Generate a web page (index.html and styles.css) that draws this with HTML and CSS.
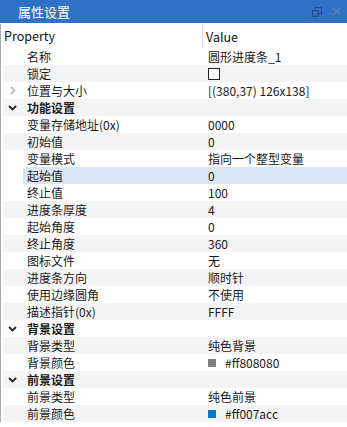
FILE: index.html
```html
<!DOCTYPE html>
<html lang="zh">
<head>
  <meta charset="UTF-8">
  <title>属性设置</title>
  <link rel="stylesheet" href="styles.css">
</head>
<body>
  <!-- 标题栏 -->
  <div class="titlebar">
    <span class="title">属性设置</span>
    <div class="tools">
      <svg class="btn-float" width="10" height="10" viewBox="0 0 10 10">
        <path d="M3 0.5h6.5v6.5h-2M3 0.5v2" fill="none" stroke="#1d4f91" stroke-width="1.2"/>
        <rect x="0.6" y="3.6" width="5.8" height="5.8" fill="none" stroke="#1d4f91" stroke-width="1.2"/>
      </svg>
      <svg class="btn-close" width="9" height="9" viewBox="0 0 9 9">
        <path d="M1 1l7 7M8 1l-7 7" stroke="#5a80b6" stroke-width="1.6"/>
      </svg>
    </div>
  </div>

  <!-- 属性表 -->
  <div class="prop-table">
    <div class="head">
      <div class="col-name">Property</div>
      <div class="col-value">Value</div>
    </div>

    <div class="row"><div class="name">名称</div><div class="value">圆形进度条_1</div></div>
    <div class="row alt"><div class="name">锁定</div><div class="value"><span class="checkbox"></span></div></div>
    <div class="row">
      <div class="name"><svg class="arrow" width="6" height="9" viewBox="0 0 6 9"><path d="M1 1l3.5 3.5L1 8" fill="none" stroke="#a0a0a0" stroke-width="1.2"/></svg>位置与大小</div>
      <div class="value">[(380,37) 126x138]</div>
    </div>

    <div class="row alt group">
      <div class="name"><svg class="arrow" width="9" height="6" viewBox="0 0 9 6"><path d="M1 1l3.5 3.5L8 1" fill="none" stroke="#222" stroke-width="1.8"/></svg>功能设置</div>
      <div class="value"></div>
    </div>
    <div class="row"><div class="name">变量存储地址(0x)</div><div class="value">0000</div></div>
    <div class="row alt"><div class="name">初始值</div><div class="value">0</div></div>
    <div class="row"><div class="name">变量模式</div><div class="value">指向一个整型变量</div></div>
    <div class="row selected"><div class="name">起始值</div><div class="value">0</div></div>
    <div class="row"><div class="name">终止值</div><div class="value">100</div></div>
    <div class="row alt"><div class="name">进度条厚度</div><div class="value">4</div></div>
    <div class="row"><div class="name">起始角度</div><div class="value">0</div></div>
    <div class="row alt"><div class="name">终止角度</div><div class="value">360</div></div>
    <div class="row"><div class="name">图标文件</div><div class="value">无</div></div>
    <div class="row alt"><div class="name">进度条方向</div><div class="value">顺时针</div></div>
    <div class="row"><div class="name">使用边缘圆角</div><div class="value">不使用</div></div>
    <div class="row alt"><div class="name">描述指针(0x)</div><div class="value">FFFF</div></div>

    <div class="row group">
      <div class="name"><svg class="arrow" width="9" height="6" viewBox="0 0 9 6"><path d="M1 1l3.5 3.5L8 1" fill="none" stroke="#222" stroke-width="1.8"/></svg>背景设置</div>
      <div class="value"></div>
    </div>
    <div class="row alt"><div class="name">背景类型</div><div class="value">纯色背景</div></div>
    <div class="row"><div class="name">背景颜色</div><div class="value"><span class="swatch" style="background:#808080"></span>#ff808080</div></div>

    <div class="row alt group">
      <div class="name"><svg class="arrow" width="9" height="6" viewBox="0 0 9 6"><path d="M1 1l3.5 3.5L8 1" fill="none" stroke="#222" stroke-width="1.8"/></svg>前景设置</div>
      <div class="value"></div>
    </div>
    <div class="row"><div class="name">前景类型</div><div class="value">纯色前景</div></div>
    <div class="row alt"><div class="name">前景颜色</div><div class="value"><span class="swatch" style="background:#007acc"></span>#ff007acc</div></div>
  </div>
</body>
</html>
```

FILE: styles.css
```css
/* 通用样式 */
body {
  margin: 0;
  padding: 0;
  width: 347px;
  height: 427px;
  overflow: hidden;
  background-color: #fff;
  color: #1a1a1a;
  font-family: "Microsoft YaHei", "Noto Sans CJK SC", sans-serif;
  font-size: 12px;
}

/* 标题栏 */
.titlebar {
  height: 23px;
  background-color: #2f71c5;
  display: flex;
  align-items: center;
  justify-content: space-between;
  padding: 0 0 0 18px;
  color: white;
}

.titlebar .title {
  font-size: 13px;
  line-height: 23px;
}

.tools {
  display: flex;
  align-items: center;
  gap: 10px;
  padding-right: 6px;
}

/* 属性表 */
.prop-table {
  border-left: 1px solid #a9a9a9;
  margin-top: 1px;
}

.head {
  display: flex;
  height: 24px;
  align-items: center;
  font-size: 12.5px;
  color: #111;
}

.head .col-name {
  width: 198px;
  padding-left: 3px;
  border-right: 1px solid #e0e0e0;
  line-height: 22px;
}

.head .col-value {
  padding-left: 3px;
}

.row {
  display: flex;
  height: 17px;
  line-height: 17px;
  margin-left: 2px;
}

.row.alt {
  background-color: #f4f4f4;
}

.row.selected {
  background: linear-gradient(to right, #fff 20px, #dae6f3 20px);
}

.row .name {
  width: 180px;
  padding-left: 24px;
  position: relative;
  white-space: nowrap;
}

.row .value {
  padding-left: 1px;
  display: flex;
  align-items: center;
  white-space: nowrap;
}

.group .name {
  font-weight: bold;
}

.arrow {
  position: absolute;
  left: 5px;
  top: 6px;
}

.row:not(.group) .arrow {
  left: 7px;
  top: 4px;
}

.checkbox {
  display: inline-block;
  width: 10px;
  height: 10px;
  border: 1px solid #222;
  background: #fff;
}

.swatch {
  display: inline-block;
  width: 8px;
  height: 8px;
  margin-right: 9px;
}
```
